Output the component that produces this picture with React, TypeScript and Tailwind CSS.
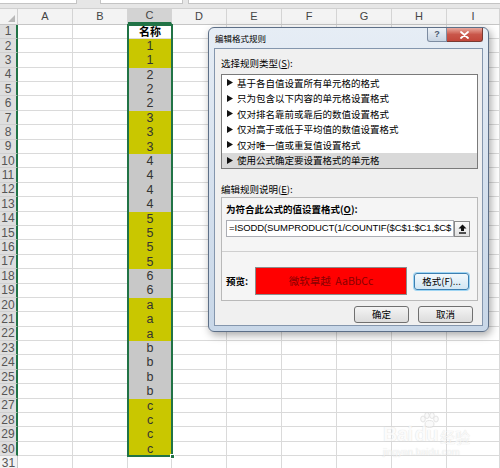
import React from 'react';

const cols = [
  { k: 'A', w: 'w-[55px]' },
  { k: 'B', w: 'w-[55px]' },
  { k: 'C', w: 'w-[44px]' },
  { k: 'D', w: 'w-[55px]' },
  { k: 'E', w: 'w-[55px]' },
  { k: 'F', w: 'w-[55px]' },
  { k: 'G', w: 'w-[55px]' },
  { k: 'H', w: 'w-[55px]' },
  { k: 'I', w: 'flex-1' },
];

const values = ['名称', '1', '1', '2', '2', '2', '3', '3', '3', '4', '4', '4', '4', '5', '5', '5', '5', '6', '6', 'a', 'a', 'a', 'b', 'b', 'b', 'b', 'c', 'c', 'c', 'c'];
const oddGroups = ['1', '3', '5', 'a', 'c'];

const ruleTypes = [
  '基于各自值设置所有单元格的格式',
  '只为包含以下内容的单元格设置格式',
  '仅对排名靠前或靠后的数值设置格式',
  '仅对高于或低于平均值的数值设置格式',
  '仅对唯一值或重复值设置格式',
  '使用公式确定要设置格式的单元格',
];

const cjk = "font-['Microsoft_YaHei','Noto_Sans_CJK_SC',sans-serif]";

function SheetRow({ n }: { n: number }) {
  const value = values[n - 1];
  const selected = n <= 30;
  return (
    <div className="flex h-[14.4px] shrink-0">
      <div
        className={`w-[18px] shrink-0 flex items-center justify-center text-[12px] leading-none text-[#555] border-b ${
          selected ? 'bg-[#dedede] border-b-[#cfcfcf] border-r-2 border-r-[#217346]' : 'bg-[#f2f2f2] border-b-[#d6d6d6] border-r border-r-[#c6c6c6]'
        }`}
      >
        {n}
      </div>
      {cols.map((c) => {
        if (c.k === 'C' && value) {
          const fill = n === 1 ? 'bg-white border-b border-[#dadada]' : oddGroups.includes(value) ? 'bg-[#c9c700]' : 'bg-[#c8c8c8]';
          return (
            <div key={c.k} className={`${c.w} shrink-0 flex items-center justify-center leading-none text-[#333] ${fill} ${n === 1 ? `text-[11px] font-bold text-black ${cjk}` : 'text-[12.5px]'}`}>
              {value}
            </div>
          );
        }
        return <div key={c.k} className={`${c.w} shrink-0 border-r border-b border-[#dadada]`} />;
      })}
    </div>
  );
}

function WinButton({ label, focused }: { label: string; focused?: boolean }) {
  return (
    <div
      className={`w-[55px] h-[17px] flex items-center justify-center rounded-[3px] text-[9.5px] text-black bg-gradient-to-b ${
        focused
          ? 'from-[#f2f8fc] to-[#d2e6f3] border border-[#3c7fb1] shadow-[0_0_0_1px_#9fd5f3]'
          : 'from-[#f4f4f4] to-[#dcdcdc] border border-[#707070]'
      } ${cjk}`}
    >
      {label}
    </div>
  );
}

function Dialog() {
  return (
    <div className="absolute left-[208px] top-[27px] w-[281px] h-[305px] rounded-[6px] border border-[#5d6f87] bg-gradient-to-b from-[#e6edf5] via-[#d6e1ee] to-[#c8d7e8] shadow-[2px_3px_8px_rgba(0,0,0,0.35)] flex flex-col px-[5px] pb-[5px]">
      <div className="h-[20px] shrink-0 flex items-start">
        <span className={`self-center pl-[1px] text-[8.5px] text-black ${cjk}`}>编辑格式规则</span>
        <div className="ml-auto flex">
          <div className="w-[20px] h-[14px] flex items-center justify-center rounded-bl-[3px] border border-t-0 border-[#7d8ca1] bg-gradient-to-b from-[#eef2f7] to-[#c8d4e2] text-[9px] leading-none font-bold text-[#4a5a70] font-['Liberation_Sans',sans-serif]">
            ?
          </div>
          <div className="w-[36px] h-[14px] flex items-center justify-center rounded-br-[3px] border border-t-0 border-l-0 border-[#7a3a32] bg-gradient-to-b from-[#e8a89e] via-[#c9564a] to-[#c2463a]">
            <svg width="9" height="8" viewBox="0 0 9 8">
              <path d="M1 1 L8 7 M8 1 L1 7" stroke="white" strokeWidth="1.8" strokeLinecap="round" />
            </svg>
          </div>
        </div>
      </div>

      <div className={`flex-1 bg-[#f0f0f0] border border-[#8496ad] flex flex-col pl-[6px] pr-[4px] text-black ${cjk}`}>
        <div className="mt-[8px] h-[12px] leading-[12px] text-[9.5px]">
          选择规则类型(<span className="underline">S</span>):
        </div>
        <div className="mt-[5px] h-[95px] border border-[#7a7a7a] bg-white flex flex-col">
          {ruleTypes.map((t, i) => (
            <div key={t} className={`h-[15.5px] shrink-0 flex items-center pl-[5px] text-[9.5px] ${i === 5 ? 'bg-[#d9d9d9]' : ''}`}>
              <svg width="6" height="7" viewBox="0 0 6 7" className="mr-[4px]">
                <path d="M0 0 L6 3.5 L0 7 Z" fill="#111" />
              </svg>
              {t}
            </div>
          ))}
        </div>

        <div className="mt-[14px] h-[12px] leading-[12px] text-[9.5px]">
          编辑规则说明(<span className="underline">E</span>):
        </div>
        <div className="mt-[2px] h-[104px] border border-[#b9b9b9] bg-[#f5f5f5] flex flex-col">
          <div className="px-[4px] mt-[5px] h-[12px] leading-[12px] text-[9.5px] font-bold">
            为符合此公式的值设置格式(<span className="underline">O</span>):
          </div>
          <div className="px-[4px] mt-[5px] flex items-center">
            <div className="w-[228px] h-[17px] border border-[#abadb3] bg-white overflow-hidden whitespace-nowrap pl-[2px] flex items-center text-[9.5px] tracking-[-0.1px] font-['Liberation_Sans','Noto_Sans_CJK_SC',sans-serif]">
              =ISODD(SUMPRODUCT(1/COUNTIF($C$1:$C1,$C$
            </div>
            <div className="w-[16px] h-[16px] border border-[#8a8a8a] bg-gradient-to-b from-[#fafafa] to-[#e2e2e2] flex items-center justify-center">
              <svg width="9" height="10" viewBox="0 0 9 10">
                <path d="M4.5 0.5 L8.5 4.5 L6 4.5 L6 7 L3 7 L3 4.5 L0.5 4.5 Z" fill="#111" />
                <rect x="1" y="8.3" width="7" height="1.4" fill="#111" />
              </svg>
            </div>
          </div>
          <div className="mt-[14px] h-px bg-[#cfcfcf]" />
          <div className="px-[4px] mt-[15px] flex items-center">
            <span className="w-[29px] text-[9.5px] font-bold">预览:</span>
            <div className="w-[152px] h-[28px] border border-[#8c8c8c] bg-[#ff0000] flex items-center justify-center text-[10.5px] text-[#8a0000]">
              微软卓越&nbsp;&nbsp;AaBbCc
            </div>
            <div className="ml-[7px]">
              <WinButton label="格式(F)..." focused />
            </div>
          </div>
        </div>

        <div className="mt-[5px] flex justify-end gap-[9px] pr-[5px]">
          <WinButton label="确定" />
          <WinButton label="取消" />
        </div>
      </div>
    </div>
  );
}

function Watermark() {
  return (
    <div className="absolute left-[383px] top-[412px] w-[100px] flex flex-col items-start pointer-events-none text-[#fafafa] opacity-70 [text-shadow:0_0_1px_#c4c4c4]">
      <svg width="22" height="16" viewBox="0 0 22 16" className="ml-[35px]">
        <g fill="#f8f8f8" stroke="#cfcfcf" strokeWidth="0.8">
          <ellipse cx="5" cy="7" rx="2.3" ry="3" />
          <ellipse cx="9" cy="3.5" rx="2.3" ry="3" />
          <ellipse cx="14" cy="3.5" rx="2.3" ry="3" />
          <ellipse cx="18" cy="7" rx="2.3" ry="3" />
          <ellipse cx="11.5" cy="12" rx="4.5" ry="3.5" />
        </g>
      </svg>
      <div className="-mt-[4px] flex items-end leading-none font-['Liberation_Sans',sans-serif]">
        <span className="text-[20px] font-bold tracking-tight">Bai</span>
        <span className="text-[20px] font-bold tracking-tight ml-[2px]">du</span>
        <span className={`text-[15px] ml-[2px] ${cjk}`}>经验</span>
      </div>
      <div className="mt-[3px] text-[9.5px] leading-none font-['Liberation_Sans',sans-serif]">jingyan.baidu.com</div>
    </div>
  );
}

export default function App() {
  return (
    <div className="relative w-[500px] h-[468px] overflow-hidden bg-white font-['Liberation_Sans','Noto_Sans_CJK_SC',sans-serif]">
      <div className="h-[9px] bg-[#e6e6e6] flex items-start border-b border-[#d0d0d0]">
        <div className="w-[77px] h-[4px] bg-white border-b border-r border-[#c4c4c4]" />
        <div className="w-[23px]" />
        <div className="w-[83px] h-[4px] bg-white border-b border-x border-[#c4c4c4]" />
        <div className="w-[5px]" />
        <div className="flex-1 h-[4px] bg-white border-b border-l border-[#c4c4c4]" />
      </div>
      <div className="flex h-[15.5px] bg-[#f3f3f3] border-b border-[#c6c6c6]">
        <div className="w-[18px] shrink-0 relative border-r border-[#d0d0d0]">
          <svg width="7" height="7" viewBox="0 0 7 7" className="absolute right-[2px] bottom-[2px]">
            <path d="M7 0 L7 7 L0 7 Z" fill="#b8b8b8" />
          </svg>
        </div>
        {cols.map((c) => (
          <div
            key={c.k}
            className={`${c.w} shrink-0 flex items-center justify-center text-[11px] leading-none text-[#444] border-r border-[#d4d4d4] ${
              c.k === 'C' ? 'bg-[#d3d3d3] border-b-2 border-b-[#217346]' : ''
            }`}
          >
            {c.k}
          </div>
        ))}
      </div>
      {Array.from({ length: 31 }, (_, i) => (
        <SheetRow key={i} n={i + 1} />
      ))}

      <div className="absolute left-[127px] top-[24px] w-[46px] h-[433px] border-2 border-[#217346] pointer-events-none" />
      <div className="absolute left-[170px] top-[454px] w-[5px] h-[5px] bg-[#217346] border border-white" />

      <Dialog />
      <Watermark />
    </div>
  );
}
